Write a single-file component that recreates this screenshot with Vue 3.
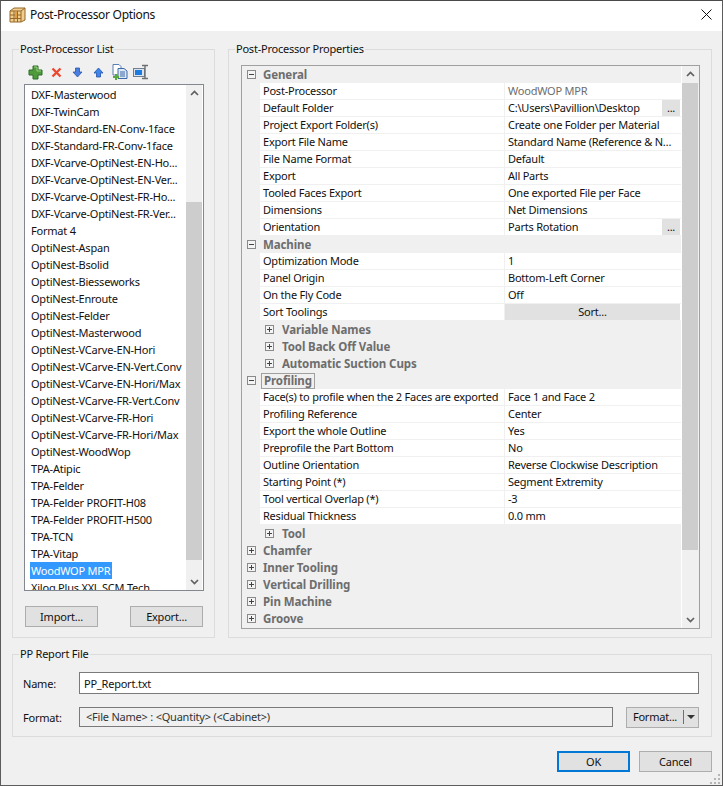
<template>
  <div class="window">
    <div class="titlebar">
      <svg class="app-icon" width="18" height="18" viewBox="0 0 18 18">
        <path d="M1 5 L5 2 H16 V14 L12 16 H1 Z" fill="#f0cf8e" stroke="#96662a" stroke-width="1" />
        <path d="M1 5 H12 V16 M12 5 L16 2 M5 5 V16 M8.500 5 V16 M1 9 H12 M1 12.500 H12" fill="none" stroke="#96662a" stroke-width="1" />
        <rect x="6" y="6" width="2" height="6" fill="#e3a040" />
      </svg>
      <span class="title">Post-Processor Options</span>
      <svg class="close" width="11" height="11" viewBox="0 0 11 11">
        <path d="M0.500 0.500 L10.500 10.500 M10.500 0.500 L0.500 10.500" stroke="#111" stroke-width="1" />
      </svg>
    </div>

    <div class="content">
      <div class="top-groups">
        <fieldset class="group list-group">
          <legend>Post-Processor List</legend>
          <div class="toolbar">
            <svg width="15" height="15" viewBox="0 0 15 15" class="tb-plus">
              <path d="M5 1 H10 V5 H14 V10 H10 V14 H5 V10 H1 V5 H5 Z" fill="#4f9a3a" stroke="#2d6e26" stroke-width="1" />
              <path d="M6 2 H9 V6 H13" fill="none" stroke="#9bd27e" stroke-width="1" />
            </svg>
            <svg width="11" height="11" viewBox="0 0 11 11" class="tb-del">
              <path d="M1.500 1.500 L9.500 9.500 M9.500 1.500 L1.500 9.500" stroke="#ec4a30" stroke-width="2.400" />
            </svg>
            <svg width="11" height="11" viewBox="0 0 11 11" class="tb-down">
              <path d="M3.500 1 H7.500 V5 H10 L5.500 10 L1 5 H3.500 Z" fill="#4a7fe0" stroke="#2a55a8" stroke-width="0.800" />
            </svg>
            <svg width="11" height="11" viewBox="0 0 11 11" class="tb-up">
              <path d="M3.500 10 H7.500 V6 H10 L5.500 1 L1 6 H3.500 Z" fill="#3f86ea" stroke="#2450a8" stroke-width="0.800" />
            </svg>
            <svg width="16" height="16" viewBox="0 0 16 16" class="tb-copy">
              <path d="M1 0.500 H7 L9 2.500 V11 H1 Z" fill="#fff" stroke="#5a7fb0" stroke-width="1" />
              <path d="M6 4.500 H12 L15 7 V14.500 H6 Z" fill="#dce8f6" stroke="#3d68a8" stroke-width="1" />
              <path d="M8 8 H13 M8 10 H13 M8 12 H13" stroke="#3d68a8" stroke-width="1" />
              <path d="M3 10 H5 V12 H7 V14 H5 V16 H3 V14 H1 V12 H3 Z" fill="#58a83c" />
            </svg>
            <svg width="16" height="16" viewBox="0 0 16 16" class="tb-rename">
              <rect x="0.500" y="4.500" width="11" height="8" fill="#dbe4ee" stroke="#6f7f90" stroke-width="1" />
              <rect x="2" y="6" width="7" height="5" fill="#1b7be0" />
              <path d="M9 1.500 H15 M9 14.500 H15 M12 1.500 V14.500" fill="none" stroke="#6f6f6f" stroke-width="1.400" />
            </svg>
          </div>

          <div class="listbox">
            <div class="list-items">
              <div v-for="item in processors" :key="item" class="list-row">
                <span :class="{ selected: item === selectedProcessor }">{{ item }}</span>
              </div>
            </div>
            <div class="scrollbar list-scroll">
              <svg class="chev" width="9" height="6" viewBox="0 0 9 6"><path d="M1 5 L4.500 1.500 L8 5" fill="none" stroke="#606060" stroke-width="1.700" /></svg>
              <div class="track"><div class="thumb"></div></div>
              <svg class="chev" width="9" height="6" viewBox="0 0 9 6"><path d="M1 1 L4.500 4.500 L8 1" fill="none" stroke="#606060" stroke-width="1.700" /></svg>
            </div>
          </div>

          <div class="list-buttons">
            <button class="btn">Import...</button>
            <button class="btn">Export...</button>
          </div>
        </fieldset>

        <fieldset class="group props-group">
          <legend>Post-Processor Properties</legend>
          <div class="grid-box">
            <div class="grid-rows">
              <template v-for="row in properties" :key="row.id">
                <div v-if="row.group" class="group-row" :class="{ nested: row.nested }">
                  <span class="expander">
                    <svg width="9" height="9" viewBox="0 0 9 9">
                      <rect x="0.500" y="0.500" width="8" height="8" fill="#f4f4f4" stroke="#8a8a8a" stroke-width="1" />
                      <path :d="row.open ? 'M2 4.500 H7' : 'M2 4.500 H7 M4.500 2 V7'" stroke="#444" stroke-width="1" />
                    </svg>
                  </span>
                  <span class="group-name" :class="{ focused: row.focused }">{{ row.group }}</span>
                </div>
                <div v-else class="prop-row">
                  <span class="prop-name">{{ row.name }}</span>
                  <span class="prop-value" :class="{ readonly: row.readonly, 'has-button': row.action }">
                    <span v-if="row.wide" class="wide-btn">{{ row.wide }}</span>
                    <template v-else>
                      <span class="value-text">{{ row.value }}</span>
                      <span v-if="row.action" class="dots">...</span>
                    </template>
                  </span>
                </div>
              </template>
            </div>
            <div class="scrollbar grid-scroll">
              <svg class="chev" width="9" height="6" viewBox="0 0 9 6"><path d="M1 5 L4.500 1.500 L8 5" fill="none" stroke="#606060" stroke-width="1.700" /></svg>
              <div class="track"><div class="thumb"></div></div>
              <svg class="chev" width="9" height="6" viewBox="0 0 9 6"><path d="M1 1 L4.500 4.500 L8 1" fill="none" stroke="#606060" stroke-width="1.700" /></svg>
            </div>
          </div>
        </fieldset>
      </div>

      <fieldset class="group report-group">
        <legend>PP Report File</legend>
        <div class="form-row name-row">
          <label>Name:</label>
          <input class="field" type="text" value="PP_Report.txt" />
        </div>
        <div class="form-row format-row">
          <label>Format:</label>
          <div class="field readonly-field">&lt;File Name&gt; : &lt;Quantity&gt; (&lt;Cabinet&gt;)</div>
          <div class="split-btn">
            <span class="split-label">Format...</span>
            <span class="split-arrow"></span>
          </div>
        </div>
      </fieldset>

      <div class="footer">
        <button class="btn default">OK</button>
        <button class="btn">Cancel</button>
      </div>
    </div>

    <svg class="grip" width="11" height="11" viewBox="0 0 11 11">
      <path d="M8 0 h2 v2 h-2 z M4 4 h2 v2 h-2 z M8 4 h2 v2 h-2 z M0 8 h2 v2 h-2 z M4 8 h2 v2 h-2 z M8 8 h2 v2 h-2 z" fill="#b5b5b5" />
    </svg>
  </div>
</template>

<script setup>
const selectedProcessor = 'WoodWOP MPR'

const processors = [
  'DXF-Masterwood',
  'DXF-TwinCam',
  'DXF-Standard-EN-Conv-1face',
  'DXF-Standard-FR-Conv-1face',
  'DXF-Vcarve-OptiNest-EN-Ho...',
  'DXF-Vcarve-OptiNest-EN-Ver...',
  'DXF-Vcarve-OptiNest-FR-Ho...',
  'DXF-Vcarve-OptiNest-FR-Ver...',
  'Format 4',
  'OptiNest-Aspan',
  'OptiNest-Bsolid',
  'OptiNest-Biesseworks',
  'OptiNest-Enroute',
  'OptiNest-Felder',
  'OptiNest-Masterwood',
  'OptiNest-VCarve-EN-Hori',
  'OptiNest-VCarve-EN-Vert.Conv',
  'OptiNest-VCarve-EN-Hori/Max',
  'OptiNest-VCarve-FR-Vert.Conv',
  'OptiNest-VCarve-FR-Hori',
  'OptiNest-VCarve-FR-Hori/Max',
  'OptiNest-WoodWop',
  'TPA-Atipic',
  'TPA-Felder',
  'TPA-Felder PROFIT-H08',
  'TPA-Felder PROFIT-H500',
  'TPA-TCN',
  'TPA-Vitap',
  'WoodWOP MPR',
  'Xilog Plus XXL SCM Tech',
]

const rawProperties = [
  { group: 'General', open: true },
  { name: 'Post-Processor', value: 'WoodWOP MPR', readonly: true },
  { name: 'Default Folder', value: 'C:\\Users\\Pavillion\\Desktop', action: true },
  { name: 'Project Export Folder(s)', value: 'Create one Folder per Material' },
  { name: 'Export File Name', value: 'Standard Name (Reference & N…' },
  { name: 'File Name Format', value: 'Default' },
  { name: 'Export', value: 'All Parts' },
  { name: 'Tooled Faces Export', value: 'One exported File per Face' },
  { name: 'Dimensions', value: 'Net Dimensions' },
  { name: 'Orientation', value: 'Parts Rotation', action: true },
  { group: 'Machine', open: true },
  { name: 'Optimization Mode', value: '1' },
  { name: 'Panel Origin', value: 'Bottom-Left Corner' },
  { name: 'On the Fly Code', value: 'Off' },
  { name: 'Sort Toolings', wide: 'Sort...' },
  { group: 'Variable Names', nested: true },
  { group: 'Tool Back Off Value', nested: true },
  { group: 'Automatic Suction Cups', nested: true },
  { group: 'Profiling', open: true, focused: true },
  { name: 'Face(s) to profile when the 2 Faces are exported', value: 'Face 1 and Face 2' },
  { name: 'Profiling Reference', value: 'Center' },
  { name: 'Export the whole Outline', value: 'Yes' },
  { name: 'Preprofile the Part Bottom', value: 'No' },
  { name: 'Outline Orientation', value: 'Reverse Clockwise Description' },
  { name: 'Starting Point (*)', value: 'Segment Extremity' },
  { name: 'Tool vertical Overlap (*)', value: '-3' },
  { name: 'Residual Thickness', value: '0.0 mm' },
  { group: 'Tool', nested: true },
  { group: 'Chamfer' },
  { group: 'Inner Tooling' },
  { group: 'Vertical Drilling' },
  { group: 'Pin Machine' },
  { group: 'Groove' },
]

const properties = rawProperties.map((row, id) => ({ ...row, id }))
</script>

<style>
html, body {
  margin: 0;
  background: #f0f0f0;
}
</style>

<style scoped>
.window {
  position: relative;
  width: 723px;
  height: 786px;
  box-sizing: border-box;
  border: 1px solid #5c5c5c;
  border-top-color: #4a4a4a;
  background: #f0f0f0;
  font-family: "Noto Sans", "Open Sans", sans-serif;
  font-size: 11px;
  letter-spacing: -0.22px;
  color: #111;
  overflow: hidden;
  display: flex;
  flex-direction: column;
}

.titlebar {
  height: 30px;
  background: #fff;
  display: flex;
  align-items: center;
  padding: 0 10px 3px 8px;
  box-sizing: border-box;
  flex: none;
}
.app-icon {
  margin-right: 3px;
}
.title {
  flex: 1;
  font-size: 12px;
  letter-spacing: -0.3px;
}

.content {
  flex: 1;
  display: flex;
  flex-direction: column;
  padding: 10px 10px 0 11px;
}
.top-groups {
  display: flex;
  gap: 13px;
  height: 597px;
}

.group {
  margin: 0;
  padding: 0;
  border: 1px solid #dcdcdc;
  min-width: 0;
  box-sizing: border-box;
}
.group legend {
  padding: 0 1px;
  line-height: 16px;
}

.list-group {
  width: 203px;
  padding: 5px 10px 0 11px;
}
.list-group legend {
  margin-left: -5px;
}
.props-group {
  flex: 1;
  padding: 8px 11px 0 12px;
}
.props-group legend {
  margin-left: -6px;
}

.toolbar {
  height: 20px;
  display: flex;
  align-items: center;
  padding-left: 4px;
}
.toolbar svg {
  flex: none;
  display: block;
}
.tb-del {
  margin-left: 8px;
}
.tb-down {
  margin-left: 10px;
}
.tb-up {
  margin-left: 10px;
}
.tb-copy {
  margin-left: 8px;
}
.tb-rename {
  margin-left: 5px;
}

.listbox {
  margin-top: 2px;
  height: 507px;
  box-sizing: border-box;
  border: 1px solid #828790;
  background: #fff;
  display: flex;
  overflow: hidden;
}
.list-items {
  flex: 1;
  min-width: 0;
  padding: 1px 0 0 6px;
  overflow: hidden;
}
.list-row {
  height: 17px;
  line-height: 17px;
  white-space: nowrap;
}
.selected {
  display: inline-block;
  background: #3399ff;
  color: #fff;
  padding: 0 2px 0 1px;
  margin-left: -1px;
}

.scrollbar {
  flex: none;
  width: 16px;
  background: #f0f0f0;
  display: flex;
  flex-direction: column;
  align-items: center;
}
.chev {
  flex: none;
  margin: 5px 0;
}
.track {
  flex: 1;
  width: 100%;
}
.thumb {
  background: #cdcdcd;
  width: 100%;
}
.list-scroll {
  margin-right: 1px;
}
.list-scroll .track {
  padding-top: 101px;
  box-sizing: border-box;
}
.list-scroll .thumb {
  height: 358px;
}
.grid-scroll {
  margin-right: 1px;
}
.grid-scroll .track {
  padding-top: 1px;
  box-sizing: border-box;
}
.grid-scroll .thumb {
  height: 467px;
}

.list-buttons {
  display: flex;
  justify-content: space-between;
  margin: 15px 1px 0;
}

.btn {
  width: 73px;
  height: 21px;
  padding: 0;
  box-sizing: border-box;
  border: 1px solid #adadad;
  background: #e1e1e1;
  font: inherit;
  letter-spacing: inherit;
  color: #111;
}
.btn.default {
  border: 2px solid #0078d7;
}

.grid-box {
  height: 564px;
  box-sizing: border-box;
  border: 1px solid #a0a0a0;
  background: #f0f0f0;
  display: flex;
  overflow: hidden;
}
.grid-rows {
  flex: 1;
  min-width: 0;
  border-right: 1px solid #fff;
}
.group-row {
  height: 17px;
  display: flex;
  align-items: center;
  background: #f0f0f0;
  font-size: 11.5px;
  letter-spacing: -0.1px;
  font-weight: 700;
  color: #6d6d6d;
}
.group-row.nested {
  padding-left: 18px;
}
.expander {
  width: 18px;
  flex: none;
  display: flex;
  justify-content: center;
  padding-left: 1px;
  box-sizing: border-box;
}
.expander svg {
  display: block;
}
.group-name {
  padding: 0 2px;
  line-height: 14px;
  border: 1px solid transparent;
}
.group-name.focused {
  border-color: #a0a0a0;
  margin-left: 1px;
  margin-right: -1px;
}
.nested .group-name {
  margin-left: 1px;
}

.prop-row {
  height: 17px;
  display: flex;
  margin-left: 18px;
  background: #fff;
  box-sizing: border-box;
  border-bottom: 1px solid #f0f0f0;
  line-height: 16px;
}
.prop-name {
  width: 245px;
  flex: none;
  padding-left: 3px;
  box-sizing: border-box;
  white-space: nowrap;
  overflow: hidden;
  border-right: 1px solid #f0f0f0;
}
.prop-value {
  flex: 1;
  min-width: 0;
  display: flex;
  padding-left: 3px;
  white-space: nowrap;
  overflow: hidden;
}
.value-text {
  flex: 1;
}
.readonly {
  color: #6d6d6d;
}
.dots {
  width: 18px;
  height: 16px;
  background: #e1e1e1;
  text-align: center;
  line-height: 16px;
  margin-right: 1px;
}
.wide-btn {
  flex: 1;
  margin-left: -3px;
  background: #e1e1e1;
  text-align: center;
  height: 16px;
  margin-right: 1px;
}

.report-group {
  height: 91px;
  margin-top: 8px;
  padding: 10px 12px 0 10px;
}
.report-group legend {
  margin-left: -4px;
}
.form-row {
  display: flex;
  align-items: center;
}
.form-row label {
  width: 56px;
  flex: none;
}
.name-row {
  height: 22px;
}
.format-row {
  margin-top: 13px;
  height: 20px;
}
.field {
  flex: 1;
  min-width: 0;
  box-sizing: border-box;
  height: 100%;
  border: 1px solid #7a7a7a;
  background: #fff;
  padding: 0 4px;
  font: inherit;
  letter-spacing: inherit;
  color: #111;
  outline: none;
}
.readonly-field {
  background: #f0f0f0;
  line-height: 18px;
  padding: 0 6px;
  color: #333;
}
.split-btn {
  width: 73px;
  height: 21px;
  flex: none;
  margin-left: 13px;
  box-sizing: border-box;
  border: 1px solid #adadad;
  background: #e1e1e1;
  display: flex;
  align-items: center;
}
.split-label {
  width: 57px;
  flex: none;
  text-align: center;
  border-right: 1px solid #6f6f6f;
  line-height: 14px;
  margin-right: 3px;
  box-sizing: border-box;
}
.split-arrow {
  width: 0;
  height: 0;
  border-left: 4px solid transparent;
  border-right: 4px solid transparent;
  border-top: 4px solid #333;
}

.footer {
  display: flex;
  justify-content: flex-end;
  gap: 9px;
  margin-top: 14px;
}

.grip {
  position: absolute;
  right: 1px;
  bottom: 0;
}
</style>
